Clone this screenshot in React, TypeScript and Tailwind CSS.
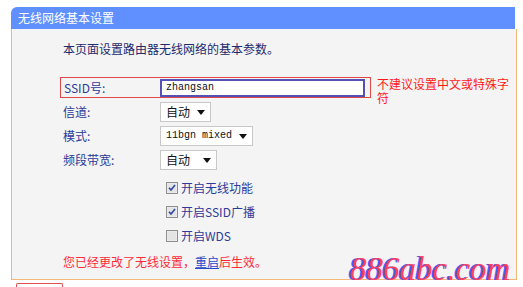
import React from 'react';

const CJK = "font-['Noto_Sans_CJK_SC',sans-serif]";

const Arrow: React.FC = () => (
  <svg width="8" height="5" viewBox="0 0 8 5" className="shrink-0">
    <path d="M0 0 L8 0 L4 5 Z" fill="#111" />
  </svg>
);

const Select: React.FC<{ label: string; width: string; mono?: boolean }> = ({ label, width, mono }) => (
  <div className={`${width} h-[20px] bg-white border border-[#c8c8c8] flex items-center justify-between pl-[5px] pr-[5px]`}>
    <span
      className={
        mono
          ? "font-['Liberation_Mono',monospace] text-[10px] leading-none text-[#111]"
          : `${CJK} text-[12px] leading-none text-[#111]`
      }
    >
      {label}
    </span>
    <Arrow />
  </div>
);

const Checkbox: React.FC<{ checked: boolean; label: string }> = ({ checked, label }) => (
  <div className="h-[24px] flex items-center pl-[6px]">
    <svg width="12" height="12" viewBox="0 0 12 12" className="shrink-0">
      <rect x="0.5" y="0.5" width="11" height="11" fill="#f0f0f0" stroke="#8e8f8f" />
      <rect x="1.5" y="1.5" width="9" height="9" fill="#e4e4e4" />
      {checked && <path d="M3 5.8 L5 8 L9 3" stroke="#2c4a9a" strokeWidth="1.6" fill="none" />}
    </svg>
    <span className={`${CJK} text-[12px] leading-none text-[#2c3a99] ml-[3px]`}>{label}</span>
  </div>
);

const Row: React.FC<{ label: string; children: React.ReactNode }> = ({ label, children }) => (
  <div className="h-[20px] flex items-center">
    <span className={`${CJK} w-[97px] text-[12px] leading-none text-[#2c3a99]`}>{label}</span>
    {children}
  </div>
);

const App: React.FC = () => {
  return (
    <div className="relative w-[523px] h-[287px] overflow-hidden bg-white">
      <div className="pt-[7px] pl-[11px]">
        <div className="w-[506px]">
          {/* Title bar */}
          <div className="w-[504px] h-[22px] bg-[#6090ff] rounded-tl-[6px] flex items-center pl-[7px]">
            <span className={`${CJK} text-[12px] leading-none text-white`}>无线网络基本设置</span>
          </div>

          {/* Panel body */}
          <div className="h-[251px] bg-[#f4f4f4] border-x border-b border-[#f3b877] pl-[51px] pt-[12px]">
            <p className={`${CJK} h-[16px] text-[12px] leading-[16px] text-[#1e2b6e]`}>本页面设置路由器无线网络的基本参数。</p>

            <div className="h-[21px] flex items-start mt-[20px] -ml-[3px]">
              <div className="w-[311px] h-[21px] shrink-0 border border-[#e04848] flex items-center pl-[3px]">
                <span className={`${CJK} w-[96px] text-[12px] leading-none text-[#2c3a99]`}>SSID号:</span>
                <div className="w-[205px] h-[18px] bg-white border-2 border-[#5450b4] flex items-center pl-[4px]">
                  <span className="font-['Liberation_Mono',monospace] text-[10px] leading-none text-[#111]">zhangsan</span>
                </div>
              </div>
              <p className={`${CJK} ml-[6px] w-[136px] text-[12px] leading-[14px] text-[#ff1a1a]`}>
                不建议设置中文或特殊字符
              </p>
            </div>

            <div className="flex flex-col gap-[4px] mt-[4px]">
              <Row label="信道:">
                <Select label="自动" width="w-[51px]" />
              </Row>
              <Row label="模式:">
                <Select label="11bgn mixed" width="w-[93px]" mono />
              </Row>
              <Row label="频段带宽:">
                <Select label="自动" width="w-[57px]" />
              </Row>
            </div>

            <div className="ml-[97px] mt-[6px]">
              <Checkbox checked label="开启无线功能" />
              <Checkbox checked label="开启SSID广播" />
              <Checkbox checked={false} label="开启WDS" />
            </div>

            <p className={`${CJK} h-[16px] mt-[6px] text-[12px] leading-[16px] text-[#ff2a3a]`}>
              您已经更改了无线设置，
              <span className="text-[#2a48c8] underline">重启</span>
              后生效。
            </p>
          </div>

          <div className="ml-[5px] mt-[3px] w-[47px] h-[10px] border border-b-0 border-[#e05050] rounded-t-[2px] bg-white" />
        </div>
      </div>

      {/* watermark */}
      <div className="absolute left-[350px] top-[253px] font-['Liberation_Serif',serif] italic text-[33px] leading-none text-[#ff3f5e] [text-shadow:-2px_0_0_#4e5cff]">
        886abc.com
      </div>
    </div>
  );
};

export default App;
